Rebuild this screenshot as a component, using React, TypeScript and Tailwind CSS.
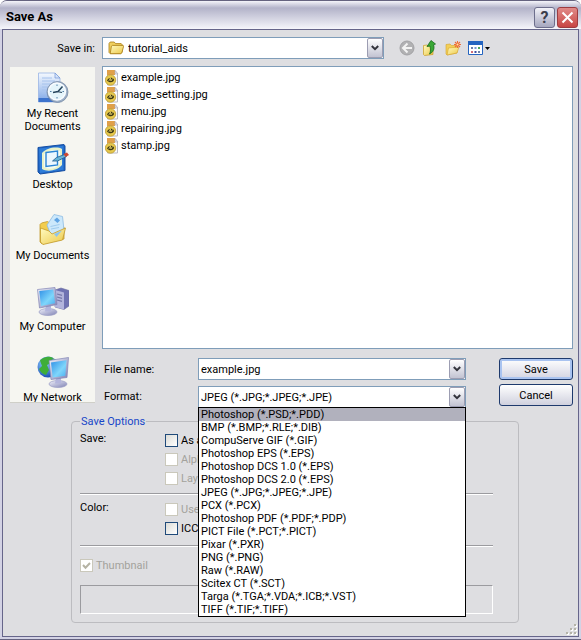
import React from "react";

const files = ["example.jpg", "image_setting.jpg", "menu.jpg", "repairing.jpg", "stamp.jpg"];

const formats = [
  "Photoshop (*.PSD;*.PDD)",
  "BMP (*.BMP;*.RLE;*.DIB)",
  "CompuServe GIF (*.GIF)",
  "Photoshop EPS (*.EPS)",
  "Photoshop DCS 1.0 (*.EPS)",
  "Photoshop DCS 2.0 (*.EPS)",
  "JPEG (*.JPG;*.JPEG;*.JPE)",
  "PCX (*.PCX)",
  "Photoshop PDF (*.PDF;*.PDP)",
  "PICT File (*.PCT;*.PICT)",
  "Pixar (*.PXR)",
  "PNG (*.PNG)",
  "Raw (*.RAW)",
  "Scitex CT (*.SCT)",
  "Targa (*.TGA;*.VDA;*.ICB;*.VST)",
  "TIFF (*.TIF;*.TIFF)",
];

function Defs() {
  return (
    <svg className="absolute h-0 w-0" aria-hidden="true">
      <defs>
        <linearGradient id="folder" x1="0" y1="0" x2="1" y2="1">
          <stop offset="0" stopColor="#fffac0" />
          <stop offset="1" stopColor="#ecc848" />
        </linearGradient>
        <linearGradient id="screen" x1="0" y1="0" x2="1" y2="1">
          <stop offset="0" stopColor="#2f8fe6" />
          <stop offset="0.6" stopColor="#7fd6fb" />
          <stop offset="1" stopColor="#48aef0" />
        </linearGradient>
        <linearGradient id="metal" x1="0" y1="0" x2="1" y2="1">
          <stop offset="0" stopColor="#f1f2fb" />
          <stop offset="1" stopColor="#7f82b4" />
        </linearGradient>
        <linearGradient id="paper" x1="0" y1="0" x2="0" y2="1">
          <stop offset="0" stopColor="#f4f9ff" />
          <stop offset="1" stopColor="#7ea6e6" />
        </linearGradient>
        <radialGradient id="globe" cx="0.35" cy="0.3" r="0.8">
          <stop offset="0" stopColor="#8fd0ff" />
          <stop offset="1" stopColor="#0d3fae" />
        </radialGradient>
      </defs>
    </svg>
  );
}

function FolderIcon() {
  return (
    <svg className="h-4 w-4 shrink-0" viewBox="0 0 16 16">
      <path d="M1 3.500 2.200 2h4l1.400 1.600h5.600l.9 1V12l-1.200 1.600H2.200L1 12.400z" fill="#f0d060" stroke="#a87b14" strokeWidth=".8" />
      <path d="M3.400 6.200 4.300 5.400h10.900l.5.7-1.900 6.800-1 .8H2.200z" fill="url(#folder)" stroke="#a87b14" strokeWidth=".8" />
    </svg>
  );
}

function JpgIcon() {
  return (
    <svg className="h-4 w-4 shrink-0" viewBox="0 0 16 16">
      <path d="M2.500.5h7.500l2.500 3v11.500H2.500z" fill="#fafafa" stroke="#b9bac6" />
      <path d="M2 0h8v5H2z" fill="#e0a04a" />
      <path d="M10 .5V4h3z" fill="#e4e4ee" stroke="#a9aab8" strokeWidth=".6" />
      <circle cx="5.500" cy="10" r="5.200" fill="#e6c84c" stroke="#b99a3a" strokeWidth=".8" />
      <path d="M2 10.500c1-3 5.500-4 7-1C9 12.500 4.500 13.500 2 10.500z" fill="#3a3614" />
      <path d="M3.800 11 5.400 8l.5 3 1.700-2.600" fill="none" stroke="#e8d36a" strokeWidth=".8" />
    </svg>
  );
}

function RecentIcon() {
  return (
    <svg className="h-8 w-8" viewBox="0 0 32 32">
      <path d="M1.500 1h16.500l5 5v24H1.500z" fill="url(#paper)" stroke="#9ab5e4" strokeWidth=".8" />
      <path d="M18 1v5h5z" fill="#d5e4fb" stroke="#7296d6" strokeWidth=".7" />
      <path d="M5 6h10M5 9h13M5 12h8M5 15h6M5 18h5M5 21h5" stroke="#a6c2ec" />
      <path d="M1.500 26h12l4 4h-16z" fill="#3d73cc" />
      <circle cx="20.500" cy="20" r="10.500" fill="#9db0c8" stroke="#6f839e" strokeWidth=".7" />
      <circle cx="20" cy="19.500" r="8.500" fill="#e5f5fb" stroke="#f9fcff" strokeWidth="1.500" />
      <path d="M20 12.500v1.500M20 25v1.500M13 19.500h1.500M25.500 19.500H27" stroke="#5480a8" />
      <path d="m25.500 14.500-4.500 5-5 1" fill="none" stroke="#29475e" strokeWidth="1.500" />
      <path d="m20 19.500 5 1" stroke="#29475e" strokeWidth="1.200" />
    </svg>
  );
}

function DesktopIcon() {
  return (
    <svg className="h-8 w-8" viewBox="0 0 32 32">
      <path d="M1 4.500 27 1.500l1 1.500V27.500L3 31l-2-2z" fill="#1d62c2" stroke="#1650a4" />
      <path d="M2 5.500 26.500 2.800v24L3 30z" fill="#2d7cd8" />
      <path d="M5 10c4-5 15-7 20-4v16c-5 6-15 7-20 4z" fill="#e9f2c8" />
      <path d="M7 11c4-4 12-5 16-3v13c-4 5-12 6-16 3z" fill="#f4fbf2" />
      <path d="m9 9.500 11.500-1.500v14L9 23.500z" fill="#ecf7ff" stroke="#2c85d5" strokeWidth="1.400" />
      <path d="m15.500 18 4-3.500 8-3 2 2-9 4.500z" fill="#68b4d8" stroke="#245c8b" strokeWidth=".8" />
      <path d="m26.500 11 3.500-1.500 2 2.500-3.500 2z" fill="#cf4731" />
    </svg>
  );
}

function DocumentsIcon() {
  return (
    <svg className="h-8 w-8" viewBox="0 0 32 32">
      <path d="M3 10.500 4.500 9l6-1.500 3 2L27 13v12L5 30l-2-2z" fill="#f2cd4e" stroke="#c39a2c" strokeWidth=".8" />
      <path d="M10 11 17 .500l8.500 2L27 16l-12 8z" fill="#cce8fb" stroke="#8dbbe2" strokeWidth=".8" />
      <path d="m17 6 3-2.500 3 3-2.500 2.500z" fill="#60a4e4" />
      <path d="m13.500 12.500 9-2M14 15l8-1.500" stroke="#9fcbee" />
      <path d="M3.500 14 12 17l3 3L28.500 14l-3 12L6 30.500 3.500 28z" fill="url(#folder)" stroke="#c39a2c" strokeWidth=".8" />
      <path d="m17 20 8-3.500-5.500 6.500z" fill="#8ec4ee" />
    </svg>
  );
}

function ComputerIcon() {
  return (
    <svg className="h-8 w-8" viewBox="0 0 32 32">
      <path d="m18 5 6-2 8 2.500V21l-5 3.500-9-2.500z" fill="#6f72b2" stroke="#6a6ca0" strokeWidth=".6" />
      <path d="m18 5 9 2.500v17L18 22z" fill="#b2b4dc" />
      <path d="m20 9 5 1.400M20 12l5 1.400M20 15l5 1.400" stroke="#7477a8" strokeWidth="1.200" />
      <ellipse cx="11" cy="27" rx="9" ry="3.500" fill="url(#metal)" stroke="#9a9cc4" strokeWidth=".7" />
      <path d="M9 20h5v6.500H8z" fill="#b3b5dc" />
      <path d="M.5 4.500 18 2.500l2 17L2.500 23z" fill="url(#metal)" stroke="#8184b4" strokeWidth=".7" />
      <path d="m2.300 6 14-1.600 1.700 13.800L4 21z" fill="url(#screen)" />
    </svg>
  );
}

function NetworkIcon() {
  return (
    <svg className="h-8 w-8" viewBox="0 0 32 32">
      <circle cx="11" cy="11" r="10.500" fill="url(#globe)" />
      <path d="M3 4.500C7 0 13 0 16 2l-2 5-4 2 2 5-3 5c-4-1-6-4-7-6l3-3z" fill="#3fae38" />
      <path d="M16 2c3 2 5 5 5 8l-4-3z" fill="#7bd160" />
      <ellipse cx="21" cy="28" rx="9" ry="3.500" fill="url(#metal)" stroke="#9a9cc4" strokeWidth=".7" />
      <path d="M19 22h5v5.500h-6z" fill="#b3b5dc" />
      <path d="m12 4.500 19.500-3-1.500 20-16 2z" fill="url(#metal)" stroke="#8184b4" strokeWidth=".7" />
      <path d="m14 6.500 15.500-2.300-1.200 15.600-12.600 1.700z" fill="url(#screen)" />
    </svg>
  );
}

const places = [
  { name: "My Recent Documents", icon: <RecentIcon /> },
  { name: "Desktop", icon: <DesktopIcon /> },
  { name: "My Documents", icon: <DocumentsIcon /> },
  { name: "My Computer", icon: <ComputerIcon /> },
  { name: "My Network", icon: <NetworkIcon /> },
];

function Chevron() {
  return (
    <span className="flex h-full w-4 items-center justify-center rounded-[2px] border border-[#9c9db2] bg-linear-to-b from-white to-[#c2c3d2]">
      <svg className="h-2 w-2" viewBox="0 0 8 8">
        <path d="m.8 2 3.200 3.200L7.200 2" fill="none" stroke="#33343c" strokeWidth="2" />
      </svg>
    </span>
  );
}

function Tick({ label, disabled, checked }: { label: string; disabled?: boolean; checked?: boolean }) {
  return (
    <label className={disabled ? "flex items-center gap-[3px] text-[#a3a29c]" : "flex items-center gap-[3px]"}>
      <span className="grid">
        <input
          type="checkbox"
          disabled={disabled}
          defaultChecked={checked}
          className="col-start-1 row-start-1 h-[13px] w-[13px] appearance-none border border-[#1f4a7a] bg-linear-to-br from-[#dcdcd7] to-white disabled:border-[#cac8bb] disabled:from-white"
        />
        {checked && (
          <svg className="col-start-1 row-start-1 h-[13px] w-[13px]" viewBox="0 0 13 13">
            <path d="m3 6 2.500 2.700L10 4" fill="none" stroke="#b5b3a4" strokeWidth="2" />
          </svg>
        )}
      </span>
      {label}
    </label>
  );
}

function Rule() {
  return <hr className="h-[2px] border-0 border-t border-b border-t-[#9b9b9f] border-b-white" />;
}

export default function App() {
  return (
    <div className="w-full overflow-hidden rounded-t-[7px] border-t border-b border-[#65637f] bg-[#d3d2e4] px-[2px] pb-[2px] font-[Roboto,'Liberation_Sans',sans-serif] text-[11px] leading-[13px] text-black">
      <Defs />
      <header className="-mx-[2px] flex h-7 items-center gap-[2px] bg-linear-to-b from-[#f5f5fa] via-[#b3b3c9] via-25% to-[#f6f6fb] pr-[3px] pl-[6px]">
        <h1 className="flex-1 pt-1 text-[13px] leading-4 font-bold">Save As</h1>
        <button aria-label="Help" className="mt-1 flex h-[21px] w-[21px] items-center justify-center rounded-[3px] border border-[#6d6e8c] bg-linear-to-b from-[#f2f2f8] to-[#a6a7bf] text-[16px] font-bold text-[#3c3d4c]">
          ?
        </button>
        <button aria-label="Close" className="mt-1 flex h-[21px] w-[21px] items-center justify-center rounded-[3px] border border-[#9d3c40] bg-linear-to-b from-[#e08a88] to-[#c84444]">
          <svg className="h-[13px] w-[13px]" viewBox="0 0 13 13">
            <path d="m1.500 1.500 10 10m0-10-10 10" stroke="#fff" strokeWidth="2" />
          </svg>
        </button>
      </header>

      <main className="relative border border-[#66658a] bg-[#dedee1] pt-[7px] pr-[5px] pb-[13px] pl-[7px]">
        <div className="flex h-[22px] items-center">
          <label htmlFor="folder-select" className="w-[92px] pr-[7px] text-right">Save in:</label>
          <div className="grid h-full w-[282px] border border-[#7f9db9] bg-white">
            <select id="folder-select" className="col-start-1 row-start-1 appearance-none pl-[25px] outline-none">
              <option>tutorial_aids</option>
            </select>
            <span className="pointer-events-none col-start-1 row-start-1 flex items-center justify-between pl-[5px]">
              <FolderIcon />
              <Chevron />
            </span>
          </div>
          <div className="flex items-center gap-[7px] pl-[15px]">
            <button aria-label="Back">
              <svg className="h-4 w-4" viewBox="0 0 16 16">
                <circle cx="8" cy="8" r="7" fill="#b1b1b3" stroke="#a2a2a5" />
                <path d="M8.500 3.500 4 8l4.500 4.500M4.500 8H13" fill="none" stroke="#f3f3f3" strokeWidth="2" />
              </svg>
            </button>
            <button aria-label="Up one level">
              <svg className="h-4 w-4" viewBox="0 0 16 16">
                <path d="M1.500 5.500 5 5l1 1h5v8.500l-8.500 1-1-1z" fill="url(#folder)" stroke="#c89a20" strokeWidth=".7" />
                <path d="M9 .5 13.500 4l-2 .8c1.500 4-.5 7.700-4 9.200 1.300-2.500 1.300-5.500.3-8L5 6.500z" fill="#39a836" stroke="#176b1c" strokeWidth=".8" />
              </svg>
            </button>
            <button aria-label="Create new folder">
              <svg className="h-4 w-4" viewBox="0 0 16 16">
                <path d="M1 4.500 5 4l1.500 1.500H12V13L2 15l-1-1z" fill="#f3cf58" stroke="#d5a42e" strokeWidth=".6" />
                <path d="m3.500 8 10.500-1-2 6L2 15z" fill="url(#folder)" stroke="#d5a42e" strokeWidth=".6" />
                <path d="M12.500 1v7M9 4.500h7M10 2l5 5M15 2l-5 5" stroke="#ef6a38" strokeWidth="1.100" />
                <circle cx="12.500" cy="4.500" r="1" fill="#ffe9a0" />
              </svg>
            </button>
            <button aria-label="Views" className="flex items-center gap-[2px]">
              <svg className="h-[15px] w-[15px]" viewBox="0 0 15 15">
                <path d="M.5.500h14v13H.500z" fill="#fff" stroke="#2464c0" />
                <path d="M0 0h15v4H0z" fill="#2464c0" />
                <path d="M3 6h2v2H3zM10 10h2v2h-2z" fill="#6c7fa8" />
                <path d="M6.500 6h2v2h-2z" fill="#7598d6" />
                <path d="M10 6h2v2h-2z" fill="#4ca65a" />
                <path d="M3 10h2v2H3z" fill="#d06c78" />
                <path d="M6.500 10h2v2h-2z" fill="#3d4da0" />
              </svg>
              <svg className="h-[3px] w-[5px]" viewBox="0 0 5 3">
                <path d="M0 0h5L2.500 3z" />
              </svg>
            </button>
          </div>
        </div>

        <div className="flex gap-[7px] pt-[7px]">
          <nav className="mt-px flex h-[336px] w-[85px] shrink-0 flex-col gap-[19px] overflow-hidden border-b border-[#cfcfc8] bg-[#f6f6f1] pt-[5px]">
            {places.map((p) => (
              <a key={p.name} href="#" className="flex h-[52px] shrink-0 flex-col items-center gap-[3px] text-center">
                <span className="shrink-0">{p.icon}</span>
                <span className="px-1">{p.name}</span>
              </a>
            ))}
          </nav>
          <div className="flex-1">
            <ul className="h-[283px] border border-[#7f9db9] bg-white pt-[2px] pl-[2px]">
              {files.map((f) => (
                <li key={f} className="flex h-[17px] items-center">
                  <JpgIcon />
                  <span>{f}</span>
                </li>
              ))}
            </ul>
            <div className="mt-[9px] flex items-start">
              <div className="grid flex-1 grid-cols-[96px_minmax(0,1fr)] items-center gap-y-[6px]">
                <label htmlFor="file-name" className="pl-[2px]">File name:</label>
                <div className="flex h-[22px] border border-[#7f9db9] bg-white">
                  <input id="file-name" defaultValue="example.jpg" className="min-w-0 flex-1 pl-[2px] outline-none" />
                  <button aria-label="Show recent names"><Chevron /></button>
                </div>
                <label htmlFor="format" className="pl-[2px]">Format:</label>
                <div className="relative h-[21px]">
                  <div className="grid h-full border border-b-0 border-[#7f9db9] bg-white">
                    <select id="format" className="col-start-1 row-start-1 appearance-none pl-[2px] outline-none">
                      <option>JPEG (*.JPG;*.JPEG;*.JPE)</option>
                    </select>
                    <span className="pointer-events-none col-start-1 row-start-1 justify-self-end"><Chevron /></span>
                  </div>
                  <ul role="listbox" aria-label="Format" className="absolute inset-x-0 top-full z-10 border border-black bg-white">
                    {formats.map((f, i) => (
                      <li key={f} role="option" aria-selected={i === 0} className="h-[13px] pl-[2px] aria-selected:bg-[#b1b1bd]">
                        {f}
                      </li>
                    ))}
                  </ul>
                </div>
              </div>
              <div className="ml-[33px] flex w-[74px] flex-col gap-1">
                <button className="h-[22px] rounded-[3px] border border-[#1e3a6d] bg-linear-to-b from-white to-[#d3d4e2] shadow-[inset_0_0_0_2px_#a9c3f0]">Save</button>
                <button className="h-[22px] rounded-[3px] border border-[#1e3a6d] bg-linear-to-b from-white to-[#d0d1de]">Cancel</button>
              </div>
            </div>
          </div>
        </div>

        <fieldset className="mt-2 mr-[54px] ml-[61px] h-[208px] rounded-[4px] border border-[#bcbcc0] px-2">
          <legend className="px-px text-[#1746c8]">Save Options</legend>
          <div className="mr-[17px]">
            <div className="flex h-[65px]">
              <span className="w-[85px] pt-1">Save:</span>
              <div className="flex flex-col gap-[6px] pt-[6px]">
                <Tick label="As a Copy" />
                <Tick label="Alpha Channels" disabled />
                <Tick label="Layers" disabled />
              </div>
            </div>
            <Rule />
            <div className="flex h-[50px]">
              <span className="w-[85px] pt-[6px]">Color:</span>
              <div className="flex flex-col gap-[6px] pt-[8px]">
                <Tick label="Use Proof Setup" disabled />
                <Tick label="ICC Profile" />
              </div>
            </div>
            <Rule />
            <div className="flex pt-3">
              <Tick label="Thumbnail" disabled checked />
            </div>
            <div className="mt-[13px] h-[29px] border border-t-[#9b9b9f] border-r-white border-b-white border-l-[#9b9b9f]" />
          </div>
        </fieldset>
        <svg className="absolute right-px bottom-px h-[11px] w-[11px]" viewBox="0 0 11 11">
          <path d="M9 1h2v2H9zM5 5h2v2H5zM9 5h2v2H9zM1 9h2v2H1zM5 9h2v2H5zM9 9h2v2H9z" fill="#fff" />
          <path d="M8 0h2v2H8zM4 4h2v2H4zM8 4h2v2H8zM0 8h2v2H0zM4 8h2v2H4zM8 8h2v2H8z" fill="#b4b3a8" />
        </svg>
      </main>
    </div>
  );
}
